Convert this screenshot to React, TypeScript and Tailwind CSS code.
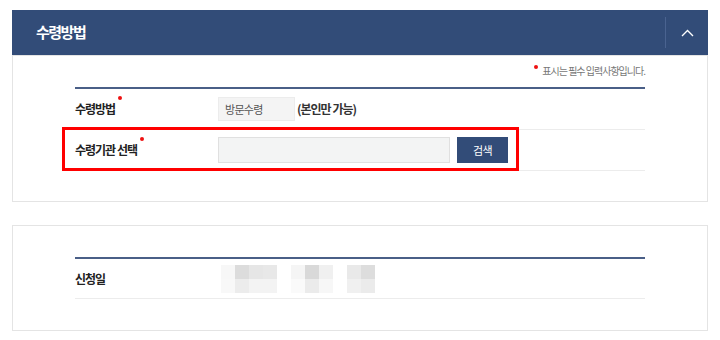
import React from "react";

const font = { fontFamily: '"Noto Sans CJK KR", "Noto Sans", sans-serif' };

function Dot() {
  return <span className="ml-[3px] mt-[-4px] inline-block h-[4px] w-[4px] rounded-full bg-[#ee1111]" />;
}

function Label({ text, required }: { text: string; required?: boolean }) {
  return (
    <div className="flex w-[143px] shrink-0 items-start text-[12px] font-bold leading-[18px] tracking-[-1px] text-[#222]">
      <span>{text}</span>
      {required && <Dot />}
    </div>
  );
}

const blur1 = [
  ["#f7f7f7", "#dcdcdc", "#e6e6e6", "#e8e8e8"],
  ["#f8f8f8", "#ececec", "#f3f3f3", "#f3f3f3"],
];
const blur2 = [
  ["#f5f5f5", "#d9d9d9", "#f0f0f0"],
  ["#fafafa", "#ebebeb", "#f7f7f7"],
];
const blur3 = [
  ["#e9e9e9", "#dddddd"],
  ["#f0f0f0", "#ebebeb"],
];

function Blur({ cells }: { cells: string[][] }) {
  return (
    <div className="flex flex-col">
      {cells.map((row, i) => (
        <div key={i} className="flex">
          {row.map((c, j) => (
            <div key={j} className="h-[14px] w-[14px]" style={{ backgroundColor: c }} />
          ))}
        </div>
      ))}
    </div>
  );
}

export default function App() {
  return (
    <div className="min-h-[340px] w-[720px] bg-white px-[12px] pt-[10px]" style={font}>
      {/* Panel 1 */}
      <div className="w-[696px]">
        <div className="flex h-[45px] items-center justify-between bg-[#324c78]">
          <div className="pl-[24px] text-[15px] font-bold tracking-[-1.5px] text-white">수령방법</div>
          <div className="flex h-full items-center">
            <div className="h-[31px] w-px bg-[#4a6390]" />
            <div className="flex w-[42px] items-center justify-center">
              <svg width="13" height="8" viewBox="0 0 13 8">
                <polyline points="1,7 6.5,1.5 12,7" fill="none" stroke="#ffffff" strokeWidth="1.4" />
              </svg>
            </div>
          </div>
        </div>
        <div className="border border-[#e4e4e4] px-[62px] pb-[30px] pt-[4px]">
          <div className="flex h-[20px] items-center justify-end text-[10px] text-[#777]">
            <span className="mt-[-6px] mr-[4px] inline-block h-[4px] w-[4px] rounded-full bg-[#ee1111]" />
            <span className="tracking-[-1px]">표시는 필수 입력사항입니다.</span>
          </div>
          <div className="mt-[7px] border-t-2 border-[#4a5f87]">
            <div className="flex h-[41px] items-center border-b border-[#ececec]">
              <Label text="수령방법" required />
              <div className="flex h-[24px] w-[77px] items-center border border-[#ececec] bg-[#f4f4f4] pl-[6px] text-[11px] tracking-[-0.7px] text-[#555]">
                방문수령
              </div>
              <span className="ml-[2px] text-[12px] font-bold tracking-[-1px] text-[#333]">(본인만 가능)</span>
            </div>
            <div className="relative flex h-[41px] items-center border-b border-[#ececec]">
              <div className="pointer-events-none absolute left-[-13px] top-[-3px] h-[44px] w-[457px] border-[3px] border-[#ff0000]" />
              <Label text="수령기관 선택" required />
              <div className="h-[26px] w-[232px] border border-[#e0e0e0] bg-[#f3f4f4]" />
              <button className="ml-[7px] flex h-[26px] w-[51px] items-center justify-center bg-[#324c78] text-[11px] tracking-[-0.5px] text-white">
                검색
              </button>
            </div>
          </div>
        </div>
      </div>

      {/* Panel 2 */}
      <div className="mt-[23px] w-[696px] border border-[#e4e4e4] px-[62px] pb-[31px] pt-[31px]">
        <div className="border-t-2 border-[#4a5f87]">
          <div className="flex h-[40px] items-center border-b border-[#ececec]">
            <div className="w-[146px] shrink-0 text-[12px] font-bold leading-[18px] tracking-[-1px] text-[#222]">신청일</div>
            <div className="flex gap-[14px]">
              <Blur cells={blur1} />
              <Blur cells={blur2} />
              <Blur cells={blur3} />
            </div>
          </div>
        </div>
      </div>
    </div>
  );
}
